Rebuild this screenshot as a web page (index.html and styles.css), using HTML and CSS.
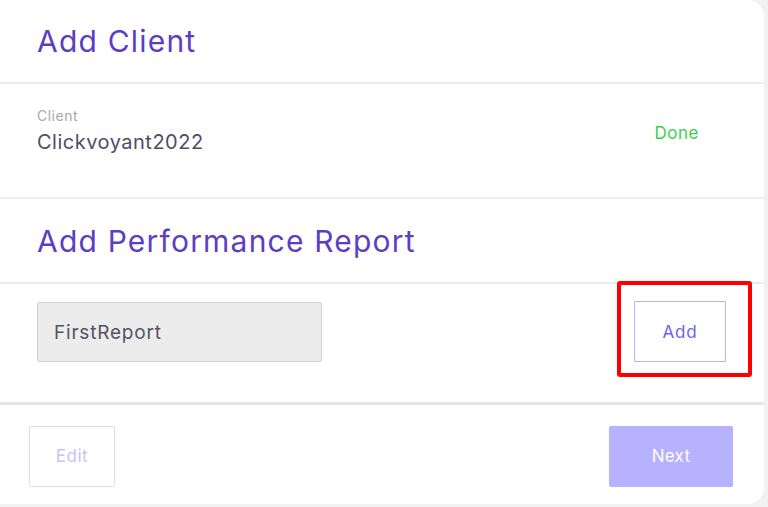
FILE: index.html
```html
<!DOCTYPE html>
<html>
<head>
<meta charset="utf-8">
<link rel="stylesheet" href="styles.css">
</head>
<body>
<div class="card">
  <div class="section head">
    <h2 class="title">Add Client</h2>
  </div>
  <div class="divider"></div>
  <div class="section client">
    <div class="client-info">
      <div class="label">Client</div>
      <div class="value">Clickvoyant2022</div>
    </div>
    <div class="done">Done</div>
  </div>
  <div class="divider"></div>
  <div class="section head">
    <h2 class="title">Add Performance Report</h2>
  </div>
  <div class="divider"></div>
  <div class="section report">
    <div class="input">FirstReport</div>
    <div class="add-wrap">
      <button class="btn-add">Add</button>
      <div class="highlight"></div>
    </div>
  </div>
  <div class="divider thick"></div>
  <div class="section footer">
    <button class="btn-edit">Edit</button>
    <button class="btn-next">Next</button>
  </div>
</div>
</body>
</html>
```
FILE: styles.css
```css
html, body {
  margin: 0;
  padding: 0;
}
body {
  background: #f1f1f1;
  font-family: "Inter", "Noto Sans", sans-serif;
  width: 768px;
  height: 507px;
  overflow: hidden;
}
.card {
  width: 764px;
  height: 504px;
  background: #fff;
  border-radius: 0 16px 16px 0;
  display: flex;
  flex-direction: column;
  box-sizing: border-box;
}
.section {
  padding-left: 37px;
  box-sizing: border-box;
}
.head {
  height: 82px;
  display: flex;
  align-items: center;
}
.head:nth-child(5) {
  height: 83px;
}
.title {
  margin: 0;
  font-weight: 400;
  font-size: 30px;
  color: #5b3ec4;
  letter-spacing: 1.2px;
}
.divider {
  height: 2px;
  background: #ececec;
}
.divider.thick {
  height: 3px;
  background: #e6e6e6;
}
.client {
  height: 113px;
  display: flex;
  align-items: flex-start;
  justify-content: space-between;
  padding-top: 24px;
  padding-right: 65px;
}
.label {
  font-size: 14px;
  color: #a9a9a9;
  line-height: 16px;
  letter-spacing: 0.5px;
}
.value {
  font-size: 20px;
  color: #4f4d66;
  margin-top: 5px;
  line-height: 26px;
  letter-spacing: 0.5px;
}
.done {
  font-size: 17px;
  color: #3dcf4b;
  margin-top: 15px;
  letter-spacing: 0.5px;
}
.report {
  height: 118px;
  display: flex;
  align-items: flex-start;
  justify-content: space-between;
  padding-top: 18px;
  padding-right: 38px;
}
.input {
  width: 285px;
  height: 60px;
  box-sizing: border-box;
  background: #ececec;
  border: 1px solid #d0d0d0;
  border-radius: 2px;
  display: flex;
  align-items: center;
  padding-left: 16px;
  font-size: 19px;
  letter-spacing: 0.8px;
  color: #55535f;
}
.add-wrap {
  position: relative;
  margin-top: -1px;
}
button {
  font-family: inherit;
  cursor: pointer;
}
.btn-add {
  width: 92px;
  height: 61px;
  background: #fff;
  border: 1px solid #b7b4ff;
  border-radius: 1px;
  color: #6a63f5;
  font-size: 17px;
  letter-spacing: 0.8px;
}
.highlight {
  position: absolute;
  left: -17px;
  top: -20px;
  right: -26px;
  bottom: -15px;
  border: 4px solid #ff0000;
  border-radius: 3px;
  pointer-events: none;
}
.footer {
  flex: 1;
  display: flex;
  justify-content: space-between;
  align-items: flex-start;
  padding-left: 29px;
  padding-right: 31px;
  padding-top: 21px;
}
.btn-edit {
  width: 86px;
  height: 61px;
  background: #fff;
  border: 1px solid #dcd9ff;
  border-radius: 2px;
  color: #c6c2fb;
  font-size: 17px;
  letter-spacing: 0.5px;
  padding-bottom: 3px;
}
.btn-next {
  width: 124px;
  height: 61px;
  background: #b7b2fd;
  border: none;
  border-radius: 2px;
  color: #ffffff;
  font-size: 17px;
  letter-spacing: 0.3px;
  padding-bottom: 3px;
}
```
